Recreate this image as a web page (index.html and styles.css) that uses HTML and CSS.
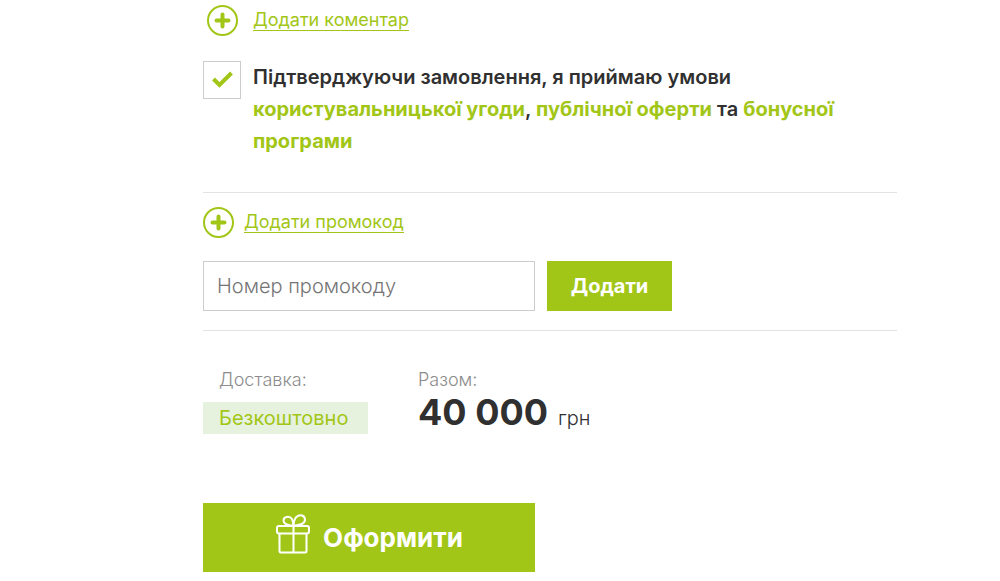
FILE: index.html
```html
<!DOCTYPE html>
<html lang="uk">
<head>
  <meta charset="UTF-8">
  <meta name="viewport" content="width=device-width, initial-scale=1.0">
  <title>Оформлення замовлення</title>
  <link rel="stylesheet" href="styles.css">
</head>
<body>
  <form class="checkout">
    <div class="add-row add-comment">
      <svg class="plus" viewBox="0 0 31 31" aria-hidden="true">
        <circle cx="15.5" cy="15.5" r="14.5" />
        <path d="M15.5 9.5v12M9.5 15.5h12" />
      </svg>
      <a href="#comment">Додати коментар</a>
    </div>

    <div class="agree">
      <span class="check">
        <input type="checkbox" id="agree" checked>
        <svg viewBox="0 0 38 38" aria-hidden="true">
          <path d="M10.5 18l6 6L28.5 12" />
        </svg>
      </span>
      <label for="agree">Підтверджуючи замовлення, я приймаю умови <a href="#terms">користувальницької угоди</a>, <a href="#offer">публічної оферти</a> та <a href="#bonus">бонусної програми</a></label>
    </div>

    <section class="promo">
      <div class="add-row">
        <svg class="plus" viewBox="0 0 31 31" aria-hidden="true">
          <circle cx="15.5" cy="15.5" r="14.5" />
          <path d="M15.5 9.5v12M9.5 15.5h12" />
        </svg>
        <a href="#promocode">Додати промокод</a>
      </div>
      <div class="promo-form">
        <input type="text" id="promocode" placeholder="Номер промокоду" aria-label="Номер промокоду">
        <button type="button">Додати</button>
      </div>
    </section>

    <div class="totals">
      <div class="delivery">
        <span class="label">Доставка:</span>
        <span class="free">Безкоштовно</span>
      </div>
      <div class="sum">
        <span class="label">Разом:</span>
        <p class="price"><strong>40 000</strong><span>грн</span></p>
      </div>
    </div>

    <button class="submit" type="submit">
      <svg viewBox="0 0 36 40" aria-hidden="true">
        <rect x="2" y="12" width="32" height="7.5" rx="2" />
        <path d="M4.5 19.5V37q0 1.5 1.5 1.5H30q1.5 0 1.5-1.5V19.5M18.5 12v26.5" />
        <path d="M18.5 12C18.5 6 21 1.2 25.5 1.2c5 0 6 6 2 8.5-2.5 1.5-6 1.5-9 2.3C15 11 8.5 11.5 8.5 6.5c0-4 6-5 8.5-1.5 1 2 1.3 5 1.5 7" />
      </svg>
      <span>Оформити</span>
    </button>
  </form>
</body>
</html>
```

FILE: styles.css
```css
* {
  box-sizing: border-box;
}

body {
  margin: 0;
  background-color: #fff;
  font-family: Inter, "Open Sans", sans-serif;
  font-size: 20px;
  color: #303030;
}

a {
  color: #a2c617;
}

.checkout {
  max-width: 900px;
  margin-left: 203px;
  padding: 5px 103px 9px 0;
}

.add-row {
  display: flex;
  align-items: center;
  gap: 10px;
}

.add-row a {
  border-bottom: 1px solid #a2c617;
  font-size: 18px;
  line-height: 20px;
  text-decoration: none;
}

.add-comment {
  gap: 15px;
  padding-left: 4px;
}

.plus {
  width: 31px;
  height: 31px;
  fill: none;
  stroke: #a2c617;
  stroke-width: 2;
}

.plus path {
  stroke-width: 4;
  stroke-linecap: round;
}

.agree {
  display: flex;
  gap: 12px;
  padding: 25px 0 35px;
}

.agree label {
  font-size: 20px;
  font-weight: 600;
  line-height: 32px;
}

.agree label a {
  font-weight: 700;
  text-decoration: none;
}

.check {
  display: grid;
  flex: none;
  width: 38px;
  height: 38px;
}

.check input,
.check svg {
  grid-area: 1 / 1;
  width: 38px;
  height: 38px;
  margin: 0;
}

.check input {
  appearance: none;
  border: 1px solid #ccc;
  cursor: pointer;
}

.check svg {
  visibility: hidden;
  fill: none;
  stroke: #a2c617;
  stroke-width: 4;
  pointer-events: none;
}

.check input:checked + svg {
  visibility: visible;
}

.promo {
  padding: 14px 0 19px;
  border-top: 1px solid #e3e3e3;
  border-bottom: 1px solid #e3e3e3;
}

.promo-form {
  display: flex;
  gap: 12px;
  margin-top: 23px;
}

.promo-form input {
  width: 332px;
  height: 50px;
  padding: 0 13px;
  border: 1px solid #ccc;
  border-radius: 0;
  font: inherit;
  font-size: 20px;
}

.promo-form input::placeholder {
  font-weight: 300;
  color: #757575;
}

button {
  border: none;
  background-color: #a2c617;
  color: #fff;
  font-family: inherit;
  font-weight: 700;
  cursor: pointer;
}

.promo-form button {
  width: 125px;
  height: 50px;
  padding: 0;
  font-size: 20px;
}

.totals {
  display: flex;
  gap: 50px;
  padding-top: 39px;
}

.label {
  display: block;
  font-size: 18px;
  font-weight: 300;
  line-height: 20px;
  color: #8c8c8c;
}

.delivery {
  width: 165px;
}

.delivery .label {
  padding-left: 16px;
}

.free {
  display: block;
  margin-top: 12px;
  padding-left: 16px;
  background-color: #e6f2de;
  font-size: 20px;
  line-height: 32px;
  color: #a2c617;
}

.price {
  display: flex;
  align-items: baseline;
  gap: 10px;
  margin: 0;
  font-size: 20px;
  font-weight: 300;
  line-height: 44px;
}

.price strong {
  font-size: 36px;
  font-weight: 700;
}

.submit {
  display: flex;
  align-items: center;
  justify-content: center;
  gap: 12px;
  width: 332px;
  height: 69px;
  margin-top: 63px;
  padding: 0 0 8px;
  font-size: 26px;
}

.submit svg {
  width: 36px;
  height: 40px;
  fill: none;
  stroke: #fff;
  stroke-width: 2;
}

.submit span {
  padding-top: 8px;
}
```
